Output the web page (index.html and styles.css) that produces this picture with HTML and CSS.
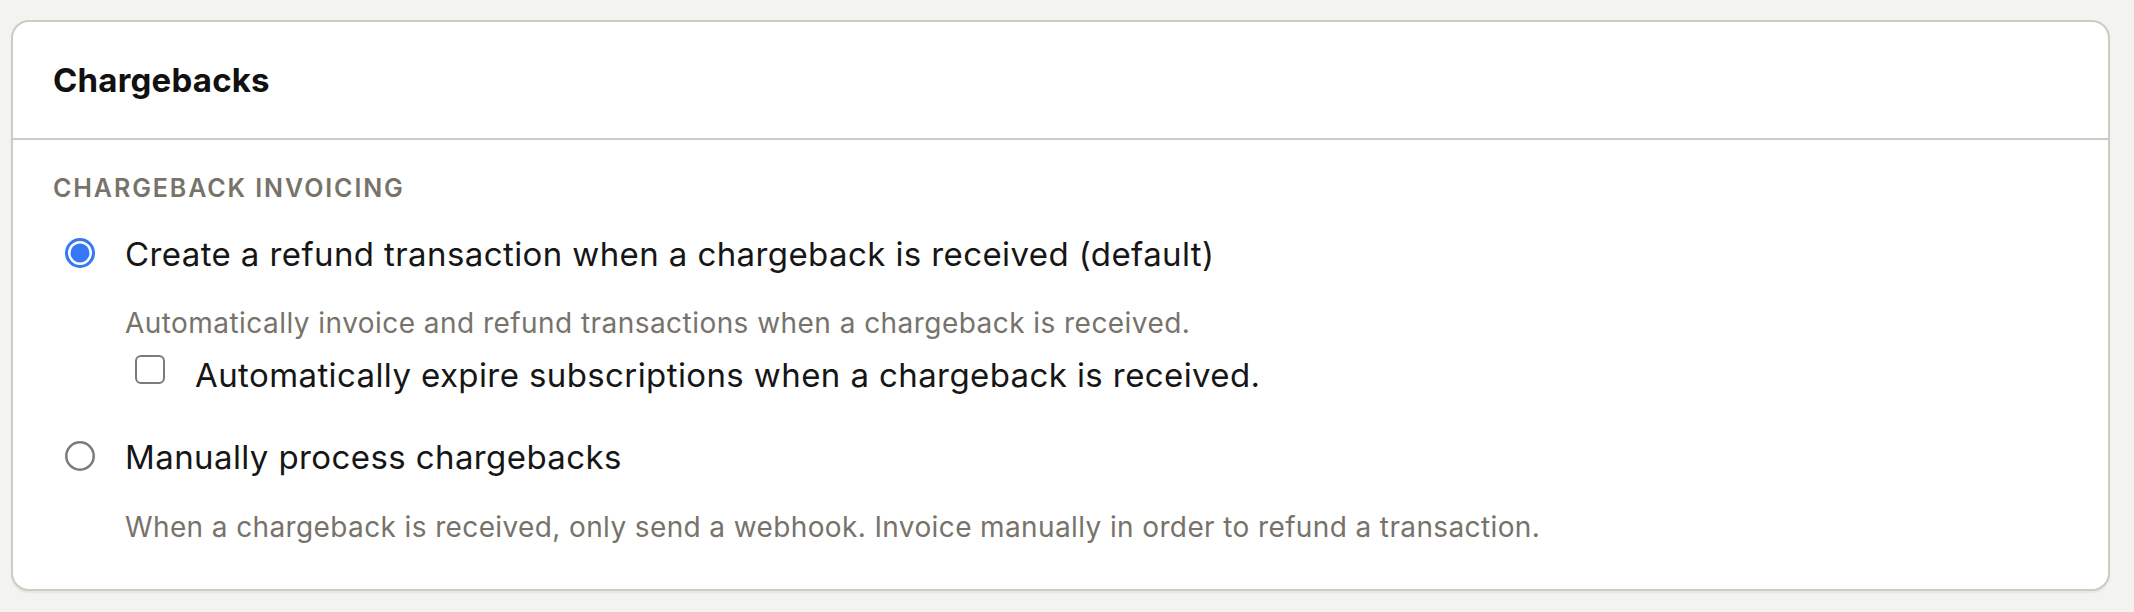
FILE: index.html
```html
<!DOCTYPE html>
<html lang="en">
<head>
<meta charset="utf-8">
<title>Chargebacks</title>
<link rel="stylesheet" href="styles.css">
</head>
<body>
<section class="card">
  <header class="card-header">
    <h2 class="card-title">Chargebacks</h2>
  </header>
  <div class="card-body">
    <div class="section-label">CHARGEBACK INVOICING</div>

    <div class="option">
      <span class="radio">
        <svg width="30" height="30" viewBox="0 0 30 30"><circle cx="15" cy="15" r="13.5" fill="#fff" stroke="#3478f6" stroke-width="3"/><circle cx="15" cy="15" r="9.5" fill="#3478f6"/></svg>
      </span>
      <span class="option-text">Create a refund transaction when a chargeback is received (default)</span>
    </div>
    <p class="option-desc">Automatically invoice and refund transactions when a chargeback is received.</p>
    <div class="sub-option">
      <span class="checkbox"></span>
      <span class="option-text">Automatically expire subscriptions when a chargeback is received.</span>
    </div>

    <div class="option option-second">
      <span class="radio">
        <svg width="30" height="30" viewBox="0 0 30 30"><circle cx="15" cy="15" r="13.75" fill="#fff" stroke="#7b7b7b" stroke-width="2.5"/></svg>
      </span>
      <span class="option-text">Manually process chargebacks</span>
    </div>
    <p class="option-desc option-desc-last">When a chargeback is received, only send a webhook. Invoice manually in order to refund a transaction.</p>
  </div>
</section>
</body>
</html>
```

FILE: styles.css
```css
html, body {
  margin: 0;
  padding: 0;
}
body {
  background: #f3f3ef;
  font-family: Inter, "Noto Sans", "Liberation Sans", sans-serif;
  color: #161616;
  padding: 20px 24px 20px 11px;
}
.card {
  background: #fff;
  border: 2px solid #cfcbc4;
  border-radius: 18px;
  box-shadow: 0 2px 2px rgba(0, 0, 0, 0.06);
}
.card-header {
  height: 116px;
  display: flex;
  align-items: center;
  padding: 0 40px;
  border-bottom: 2px solid #cfcbc4;
}
.card-title {
  margin: 0;
  font-size: 33px;
  font-weight: 700;
  line-height: 40px;
  color: #111;
  letter-spacing: 0.2px;
}
.card-body {
  padding: 32px 40px 42px;
}
.section-label {
  font-size: 25px;
  line-height: 32px;
  font-weight: 600;
  letter-spacing: 1.9px;
  color: #77736b;
}
.option {
  display: flex;
  align-items: center;
  margin-top: 26px;
  padding-left: 12px;
  height: 48px;
}
.option-second {
  margin-top: 34px;
}
.radio {
  width: 30px;
  height: 30px;
  margin-right: 30px;
  margin-top: -3px;
  display: flex;
}
.option-text {
  font-size: 33px;
  line-height: 48px;
  letter-spacing: 0.4px;
}
.option-desc {
  margin: 25px 0 0 72px;
  font-size: 28px;
  line-height: 40px;
  color: #77736b;
  letter-spacing: 0.45px;
}
.option-desc-last {
  margin-top: 26px;
  letter-spacing: 0.38px;
}
.sub-option {
  display: flex;
  align-items: center;
  margin: 8px 0 0 82px;
  height: 48px;
}
.checkbox {
  box-sizing: border-box;
  width: 30px;
  height: 29px;
  border: 2px solid #7b7b7b;
  border-radius: 6px;
  margin-right: 30px;
  margin-top: -12px;
}
```
